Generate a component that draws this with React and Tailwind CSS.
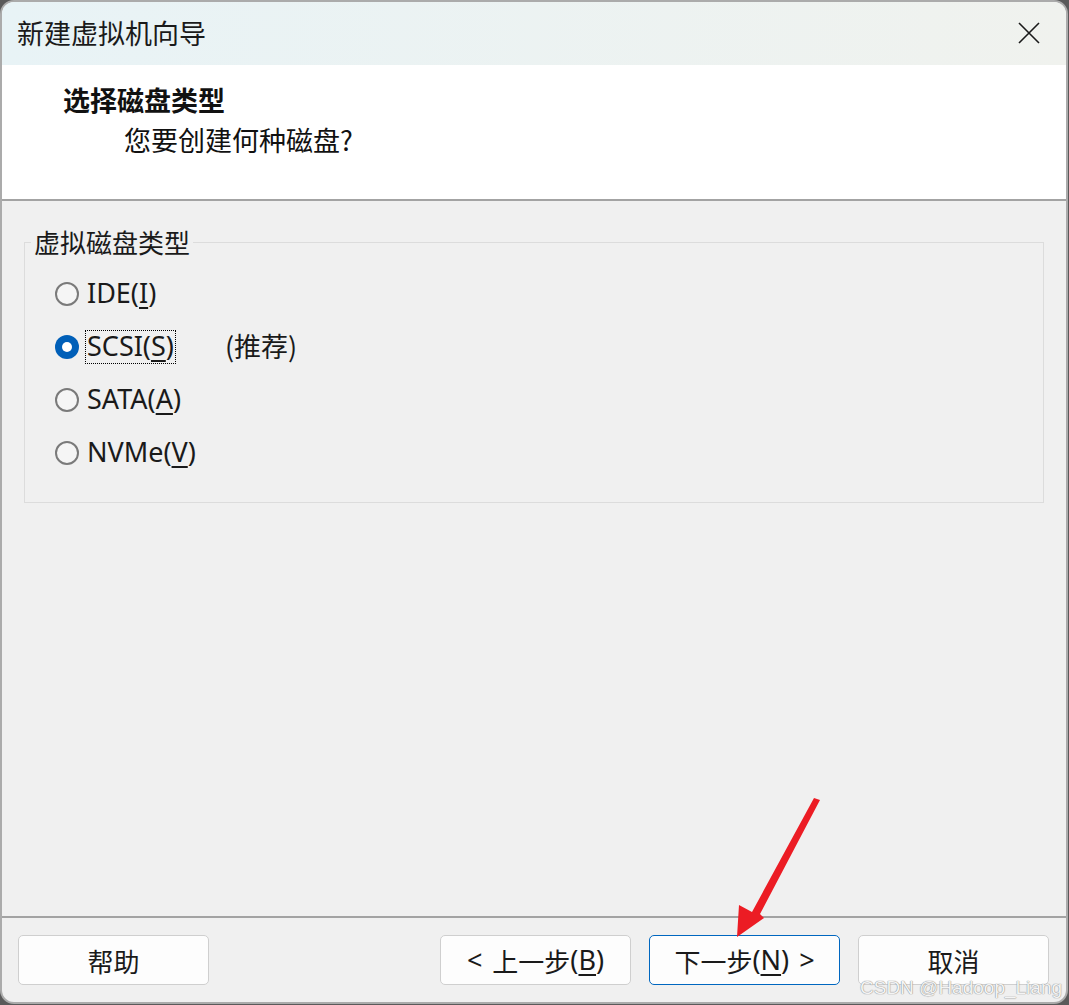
import React from 'react'

const cjk = { fontFamily: '"Noto Sans CJK SC", "Noto Sans", sans-serif' }
const latin = { fontFamily: '"Noto Sans", "Noto Sans CJK SC", sans-serif' }

function Radio({ checked, children, focused, extra }) {
  return (
    <div className="flex items-center h-[53px]">
      {checked ? (
        <span className="w-[24px] h-[24px] rounded-full bg-[#005fb8] flex items-center justify-center shrink-0">
          <span className="w-[10px] h-[10px] rounded-full bg-white" />
        </span>
      ) : (
        <span className="w-[24px] h-[24px] rounded-full border-2 border-[#7a7a7a] bg-[#f5f5f5] shrink-0" />
      )}
      <span
        className={`ml-[7px] px-[1px] h-[32px] flex items-center text-[27px] text-[#1a1a1a] whitespace-nowrap ${focused ? 'outline-1 outline-dotted outline-black' : ''}`}
        style={latin}
      >
        {children}
      </span>
      {extra && (
        <span className="ml-[50px] text-[27px] text-[#1a1a1a] whitespace-nowrap" style={cjk}>
          {extra}
        </span>
      )}
    </div>
  )
}

function Button({ children, primary }) {
  return (
    <button
      className={`w-[191px] h-[50px] rounded-[5px] bg-[#fdfdfd] flex items-center justify-center text-[26px] text-[#1a1a1a] whitespace-nowrap ${primary ? 'border-[1.5px] border-[#0067c0]' : 'border border-[#cfcfcf]'}`}
      style={cjk}
    >
      {children}
    </button>
  )
}

export default function App() {
  return (
    <div className="relative w-[1069px] h-[1005px] bg-[#5a5a5a] overflow-hidden">
      <div className="w-[1068px] h-[1004px] bg-[#f0f0f0] border-2 border-[#ababab] rounded-[14px] overflow-hidden flex flex-col">
        {/* Title bar */}
        <div className="h-[63px] shrink-0 bg-gradient-to-r from-[#e8f3f6] to-[#f0f2ee] flex items-center justify-between pl-[15px] pr-[26px]">
          <span className="text-[27px] text-[#1a1a1a] leading-none pb-[2px]" style={cjk}>
            新建虚拟机向导
          </span>
          <svg width="22" height="22" viewBox="0 0 22 22" className="mb-[2px]">
            <path d="M1 1 L21 21 M21 1 L1 21" stroke="#1a1a1a" strokeWidth="1.6" fill="none" />
          </svg>
        </div>

        {/* Header */}
        <div className="h-[136px] shrink-0 bg-white border-b-2 border-[#a3a3a3] pt-[15px]" style={cjk}>
          <div className="pl-[61px] text-[27px] leading-[40px] font-bold text-[#111]">选择磁盘类型</div>
          <div className="pl-[122px] text-[27px] leading-[40px] text-[#111]">您要创建何种磁盘?</div>
        </div>

        {/* Body */}
        <div className="flex-1 pt-[23px] pl-[22px] pr-[22px]">
          <fieldset className="border border-[#dcdcdc] h-[279px]">
            <legend className="ml-[6px] px-[3px] text-[26px] leading-[36px] text-[#1a1a1a]" style={cjk}>
              虚拟磁盘类型
            </legend>
            <div className="pl-[30px] pt-[7px]">
              <Radio>
                IDE(<span className="underline underline-offset-[4px]">I</span>)
              </Radio>
              <Radio checked focused extra="(推荐)">
                SCSI(<span className="underline underline-offset-[4px]">S</span>)
              </Radio>
              <Radio>
                SATA(<span className="underline underline-offset-[4px]">A</span>)
              </Radio>
              <Radio>
                NVMe(<span className="underline underline-offset-[4px]">V</span>)
              </Radio>
            </div>
          </fieldset>
        </div>

        {/* Footer */}
        <div className="h-[86px] shrink-0 border-t-2 border-[#a3a3a3] pt-[17px] pl-[16px] pr-[17px] flex">
          <Button>帮助</Button>
          <div className="flex-1" />
          <div className="flex gap-[18px]">
            <Button>
              <span className="text-[27px]" style={latin}>&lt;</span>
              <span className="ml-[10px]">上一步</span>
              <span className="text-[27px]" style={latin}>(</span>
              <span className="text-[27px] underline underline-offset-[4px]" style={latin}>B</span>
              <span className="text-[27px]" style={latin}>)</span>
            </Button>
            <Button primary>
              <span>下一步</span>
              <span className="text-[27px]" style={latin}>(</span>
              <span className="text-[27px] underline underline-offset-[4px]" style={latin}>N</span>
              <span className="text-[27px]" style={latin}>)</span>
              <span className="ml-[10px] text-[27px]" style={latin}>&gt;</span>
            </Button>
            <Button>取消</Button>
          </div>
        </div>
      </div>

      {/* Red annotation arrow */}
      <svg className="absolute left-0 top-0 pointer-events-none" width="1069" height="1005">
        <polygon
          points="814,798 820,800 760,914 764,918 737,937 739,905 752,912"
          fill="#ec1c24"
        />
      </svg>

      {/* Watermark */}
      <div
        className="absolute left-[860px] top-[978px] text-[19px] text-[#f4f4f4] leading-none whitespace-nowrap"
        style={{ fontFamily: '"Liberation Sans", Arial, sans-serif', textShadow: '0 0 1px #8a8a8a, 0 0 1px #8a8a8a' }}
      >
        CSDN @Hadoop_Liang
      </div>
    </div>
  )
}
